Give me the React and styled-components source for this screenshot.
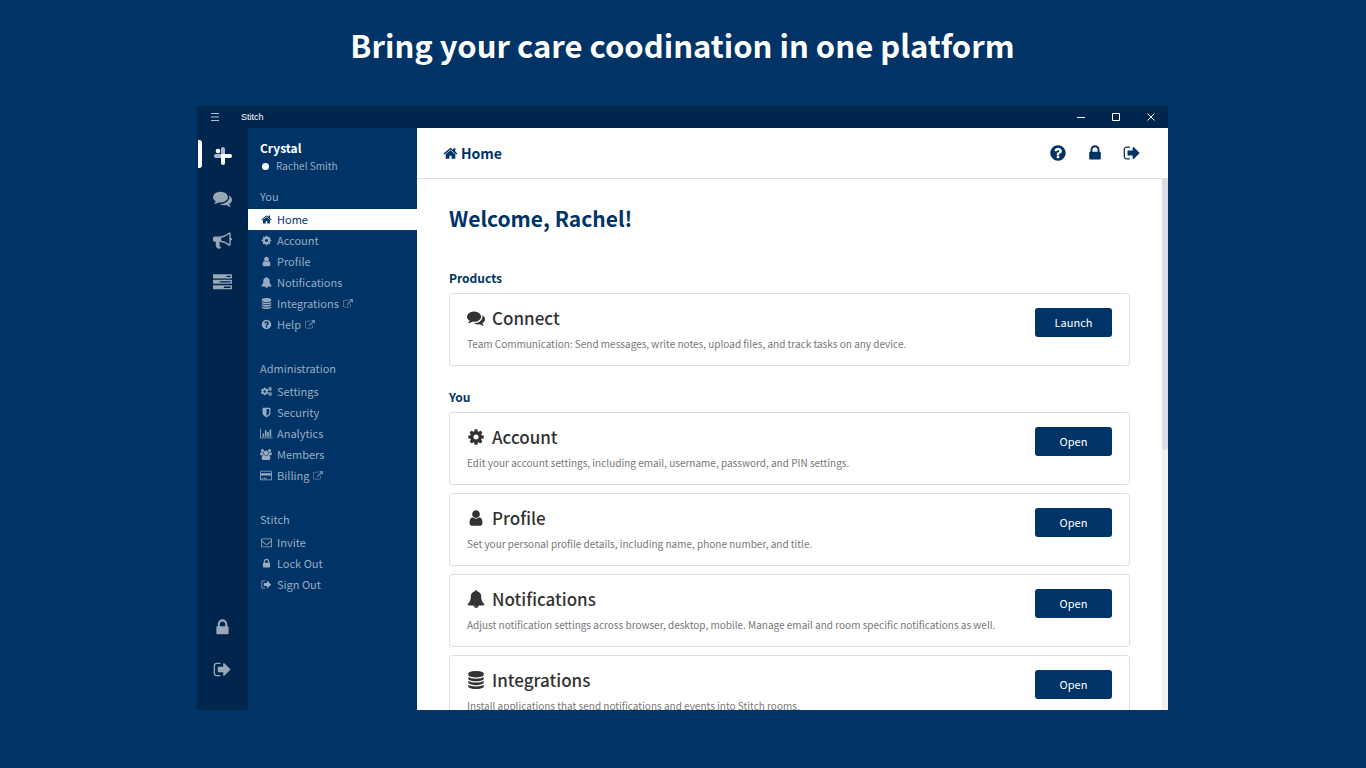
import React from 'react';
import styled, { createGlobalStyle } from 'styled-components';
import { FaCogs } from 'react-icons/fa';

const paths = {
    home: 'M1472 992v480q0 26-19 45t-45 19h-384v-384h-256v384h-384q-26 0-45-19t-19-45v-480q0-1 .5-3t.5-3l575-474 575 474q1 2 1 6zm223-69l-62 74q-8 9-21 11h-3q-13 0-21-7l-692-577-692 577q-12 8-24 7-13-2-21-11l-62-74q-8-10-7-23.5t11-21.5l719-599q32-26 76-26t76 26l244 204v-195q0-14 9-23t23-9h192q14 0 23 9t9 23v408l219 182q10 8 11 21.5t-7 23.5z',
    lock: 'M640 768h512v-192q0-106-75-181t-181-75-181 75-75 181v192zm832 96v576q0 40-28 68t-68 28h-960q-40 0-68-28t-28-68v-576q0-40 28-68t68-28h32v-192q0-184 132-316t316-132 316 132 132 316v192h32q40 0 68 28t28 68z',
    signOut: 'M704 1440q0 4 1 20t.5 26.5-3 23.5-10 19.5-20.5 6.5h-320q-119 0-203.5-84.5t-84.5-203.5v-704q0-119 84.5-203.5t203.5-84.5h320q13 0 22.5 9.5t9.5 22.5q0 4 1 20t.5 26.5-3 23.5-10 19.5-20.5 6.5h-320q-66 0-113 47t-47 113v704q0 66 47 113t113 47h312l11.5 1 11.5 3 8 5.5 7 9 2 13.5zm928-544q0 26-19 45l-544 544q-19 19-45 19t-45-19-19-45v-288h-448q-26 0-45-19t-19-45v-384q0-26 19-45t45-19h448v-288q0-26 19-45t45-19 45 19l544 544q19 19 19 45z',
    question: 'M1024 1376v-192q0-14-9-23t-23-9h-192q-14 0-23 9t-9 23v192q0 14 9 23t23 9h192q14 0 23-9t9-23zm256-672q0-88-55.5-163t-138.5-116-170-41q-243 0-371 213-15 24 8 42l132 100q7 6 19 6 16 0 25-12 53-68 86-92 34-24 86-24 48 0 85.5 26t37.5 59q0 38-20 61t-68 45q-63 28-115.5 86.5t-52.5 125.5v36q0 14 9 23t23 9h192q14 0 23-9t9-23q0-19 21.5-49.5t54.5-49.5q32-18 49-28.5t46-35 44.5-48 28-60.5 12.5-81zm384 192q0 209-103 385.5t-279.5 279.5-385.5 103-385.5-103-279.5-279.5-103-385.5 103-385.5 279.5-279.5 385.5-103 385.5 103 279.5 279.5 103 385.5z',
    cog: 'M1152 896q0-106-75-181t-181-75-181 75-75 181 75 181 181 75 181-75 75-181zm512-109v222q0 12-8 23t-20 13l-185 28q-19 54-39 91 35 50 107 138 10 12 10 25t-9 23q-27 37-99 108t-94 71q-12 0-26-9l-138-108q-44 23-91 38-16 136-29 186-7 28-36 28h-222q-14 0-24.5-8.5t-11.5-21.5l-28-184q-49-16-90-37l-141 107q-10 9-25 9-14 0-25-11-126-114-165-168-7-10-7-23 0-12 8-23 15-21 51-66.5t54-70.5q-27-50-41-99l-183-27q-13-2-21-12.5t-8-23.5v-222q0-12 8-23t19-13l186-28q14-46 39-92-40-57-107-138-10-12-10-24 0-10 9-23 26-36 98.5-107.5t94.5-71.5q13 0 26 10l138 107q44-23 91-38 16-136 29-186 7-28 36-28h222q14 0 24.5 8.5t11.5 21.5l28 184q49 16 90 37l142-107q9-9 24-9 13 0 25 10 129 119 165 170 7 8 7 22 0 12-8 23-15 21-51 66.5t-54 70.5q26 50 41 98l183 28q13 2 21 12.5t8 23.5z',
    user: 'M1536 1399q0 109-62.5 187t-150.5 78h-854q-88 0-150.5-78t-62.5-187q0-85 8.5-160.5t31.5-152 58.5-131 94-89 134.5-34.5q131 128 313 128t313-128q76 0 134.5 34.5t94 89 58.5 131 31.5 152 8.5 160.5zm-256-887q0 159-112.5 271.5t-271.5 112.5-271.5-112.5-112.5-271.5 112.5-271.5 271.5-112.5 271.5 112.5 112.5 271.5z',
    bell: 'M912 1696q0-16-16-16-59 0-101.5-42.5t-42.5-101.5q0-16-16-16t-16 16q0 73 51.5 124.5t124.5 51.5q16 0 16-16zm816-288q0 52-38 90t-90 38h-448q0 106-75 181t-181 75-181-75-75-181h-448q-52 0-90-38t-38-90q50-42 91-88t85-119.5 74.5-158.5 50-206 19.5-260q0-152 117-282.5t307-158.5q-8-19-8-39 0-40 28-68t68-28 68 28 28 68q0 20-8 39 190 28 307 158.5t117 282.5q0 139 19.5 260t50 206 74.5 158.5 85 119.5 91 88z',
    database: 'M896 768q237 0 443-43t325-127v170q0 69-103 128t-280 93.5-385 34.5-385-34.5-280-93.5-103-128v-170q119 84 325 127t443 43zm0 768q237 0 443-43t325-127v170q0 69-103 128t-280 93.5-385 34.5-385-34.5-280-93.5-103-128v-170q119 84 325 127t443 43zm0-384q237 0 443-43t325-127v170q0 69-103 128t-280 93.5-385 34.5-385-34.5-280-93.5-103-128v-170q119 84 325 127t443 43zm0-1152q208 0 385 34.5t280 93.5 103 128v128q0 69-103 128t-280 93.5-385 34.5-385-34.5-280-93.5-103-128v-128q0-69 103-128t280-93.5 385-34.5z',
    external: 'M1408 928v320q0 119-84.5 203.5t-203.5 84.5h-832q-119 0-203.5-84.5t-84.5-203.5v-832q0-119 84.5-203.5t203.5-84.5h704q14 0 23 9t9 23v64q0 14-9 23t-23 9h-704q-66 0-113 47t-47 113v832q0 66 47 113t113 47h832q66 0 113-47t47-113v-320q0-14 9-23t23-9h64q14 0 23 9t9 23zm384-864v512q0 26-19 45t-45 19-45-19l-176-176-652 652q-10 10-23 10t-23-10l-114-114q-10-10-10-23t10-23l652-652-176-176q-19-19-19-45t19-45 45-19h512q26 0 45 19t19 45z',
    comments: 'M1408 768q0 139-94 257t-256.5 186.5-353.5 68.5q-86 0-176-16-124 88-278 128-36 9-86 16h-3q-11 0-20.5-8t-11.5-21q-1-3-1-6.5t.5-6.5 2-6l2.5-5 3.5-5.5 4-5 4.5-5 4-4.5q5-6 23-25t26-29.5 22.5-29 25-38.5 20.5-44q-124-72-195-177t-71-224q0-139 94-257t256.5-186.5 353.5-68.5 353.5 68.5 256.5 186.5 94 257zm384 256q0 120-71 224.5t-195 176.5q10 24 20.5 44t25 38.5 22.5 29 26 29.5 23 25q1 1 4 4.5t4.5 5 4 5 3.5 5.5l2.5 5 2 6 .5 6.5-1 6.5q-3 14-13 22t-22 7q-50-7-86-16-154-40-278-128-90 16-176 16-271 0-472-132 58 4 88 4 161 0 309-45t264-129q125-92 192-212t67-254q0-77-23-152 129 71 204 178t75 230z',
    bullhorn: 'M1664 640q53 0 90.5 37.5t37.5 90.5-37.5 90.5-90.5 37.5v384q0 52-38 90t-90 38q-417-347-812-380-58 19-91 66t-31 100.5 40 92.5q-20 33-23 65.5t6 58 33.5 55 48 50 61.5 50.5q-29 58-111.5 83t-168.5 11.5-132-55.5q-7-23-29.5-87.5t-32-94.5-23-89-15-101 3.5-98.5 22-110.5h-122q-66 0-113-47t-47-113v-192q0-66 47-113t113-47h480q435 0 896-384 52 0 90 38t38 90v384zm-128 604v-954q-394 302-768 343v270q377 42 768 341z',
    tasks: 'M1024 1408h640v-128h-640v128zm-384-512h1024v-128h-1024v128zm640-512h384v-128h-384v128zm512 832v256q0 26-19 45t-45 19h-1664q-26 0-45-19t-19-45v-256q0-26 19-45t45-19h1664q26 0 45 19t19 45zm0-512v256q0 26-19 45t-45 19h-1664q-26 0-45-19t-19-45v-256q0-26 19-45t45-19h1664q26 0 45 19t19 45zm0-512v256q0 26-19 45t-45 19h-1664q-26 0-45-19t-19-45v-256q0-26 19-45t45-19h1664q26 0 45 19t19 45z',
    shield: 'M1344 960v-640h-448v1137q119-63 213-137 235-184 235-360zm192-768v768q0 86-33.5 170.5t-83 150-118 127.5-126.5 103-121 77.5-89.5 49.5-42.5 20q-12 6-26 6t-26-6q-16-7-42.5-20t-89.5-49.5-121-77.5-126.5-103-118-127.5-83-150-33.5-170.5v-768q0-26 19-45t45-19h1152q26 0 45 19t19 45z',
    chart: 'M640 896v512h-256v-512h256zm384-512v1024h-256v-1024h256zm1024 1152v128h-2048v-1536h128v1408h1920zm-640-896v768h-256v-768h256zm384-384v1152h-256v-1152h256z',
    users: 'M593 896q-162 5-265 128h-134q-82 0-138-40.5t-56-118.5q0-353 124-353 6 0 43.5 21t97.5 42.5 119 21.5q67 0 133-23-5 37-5 66 0 139 81 256zm1071 637q0 120-73 189.5t-194 69.5h-874q-121 0-194-69.5t-73-189.5q0-53 3.5-103.5t14-109 26.5-108.5 43-97.5 62-81 85.5-53.5 111.5-20q10 0 43 21.5t73 48 107 48 135 21.5 135-21.5 107-48 73-48 43-21.5q61 0 111.5 20t85.5 53.5 62 81 43 97.5 26.5 108.5 14 109 3.5 103.5zm-1024-1277q0 106-75 181t-181 75-181-75-75-181 75-181 181-75 181 75 75 181zm704 384q0 159-112.5 271.5t-271.5 112.5-271.5-112.5-112.5-271.5 112.5-271.5 271.5-112.5 271.5 112.5 112.5 271.5zm576 225q0 78-56 118.5t-138 40.5h-134q-103-123-265-128 81-117 81-256 0-29-5-66 66 23 133 23 59 0 119-21.5t97.5-42.5 43.5-21q124 0 124 353zm-128-609q0 106-75 181t-181 75-181-75-75-181 75-181 181-75 181 75 75 181z',
    card: 'M1760 128q66 0 113 47t47 113v1216q0 66-47 113t-113 47h-1600q-66 0-113-47t-47-113v-1216q0-66 47-113t113-47h1600zm-1600 128q-13 0-22.5 9.5t-9.5 22.5v224h1664v-224q0-13-9.5-22.5t-22.5-9.5h-1600zm1600 1280q13 0 22.5-9.5t9.5-22.5v-608h-1664v608q0 13 9.5 22.5t22.5 9.5h1600zm-1504-128v-128h256v128h-256zm384 0v-128h384v128h-384z',
    envelope: 'M1664 1504v-768q-32 36-69 66-268 206-426 338-51 43-83 67t-86.5 48.5-102.5 24.5h-2q-48 0-102.5-24.5t-86.5-48.5-83-67q-158-132-426-338-37-30-69-66v768q0 13 9.5 22.5t22.5 9.5h1472q13 0 22.5-9.5t9.5-22.5zm0-1051v-24.5l-.5-13-3-12.5-5.5-9-9-7.5-14-2.5h-1472q-13 0-22.5 9.5t-9.5 22.5q0 168 147 284 193 152 401 317 6 5 35 29.5t46 37.5 44.5 31.5 50.5 27.5 43 9h2q20 0 43-9t50.5-27.5 44.5-31.5 46-37.5 35-29.5q208-165 401-317 54-43 100.5-115.5t46.5-131.5zm128-37v1088q0 66-47 113t-113 47h-1472q-66 0-113-47t-47-113v-1088q0-66 47-113t113-47h1472q66 0 113 47t47 113z',
};

// a few glyphs are wider than the usual 1792 grid
const widths = { chart: 2048, users: 1920, card: 1920 };

function Icon({ name, size }) {
    if (name === 'cogs') return <FaCogs size={size} aria-hidden="true" />;
    const w = widths[name] || 1792;
    return (
        <svg width={Math.round(size * w / 1792)} height={size} viewBox={`0 0 ${w} 1792`} fill="currentColor" aria-hidden="true">
            <path d={paths[name]} />
        </svg>
    );
}

function Logo() {
    return (
        <svg width="20" height="20" viewBox="0 0 20 20" aria-hidden="true">
            <rect x="8" y="1" width="4" height="10" rx="2" fill="#a9b8d0" />
            <rect x="1" y="8" width="10" height="4" rx="2" fill="#a9b8d0" />
            <rect x="8" y="8" width="11" height="4" rx="2" fill="#fff" />
            <rect x="8" y="8" width="4" height="11" rx="2" fill="#fff" />
            <circle cx="5" cy="5" r="2.3" fill="#fff" />
        </svg>
    );
}

const menu = [
    {
        title: 'You',
        items: [
            { icon: 'home', label: 'Home', active: true },
            { icon: 'cog', label: 'Account' },
            { icon: 'user', label: 'Profile' },
            { icon: 'bell', label: 'Notifications' },
            { icon: 'database', label: 'Integrations', external: true },
            { icon: 'question', label: 'Help', external: true },
        ],
    },
    {
        title: 'Administration',
        items: [
            { icon: 'cogs', label: 'Settings' },
            { icon: 'shield', label: 'Security' },
            { icon: 'chart', label: 'Analytics' },
            { icon: 'users', label: 'Members' },
            { icon: 'card', label: 'Billing', external: true },
        ],
    },
    {
        title: 'Stitch',
        items: [
            { icon: 'envelope', label: 'Invite' },
            { icon: 'lock', label: 'Lock Out' },
            { icon: 'signOut', label: 'Sign Out' },
        ],
    },
];

const sections = [
    {
        title: 'Products',
        cards: [
            { icon: 'comments', title: 'Connect', action: 'Launch', text: 'Team Communication: Send messages, write notes, upload files, and track tasks on any device.' },
        ],
    },
    {
        title: 'You',
        cards: [
            { icon: 'cog', title: 'Account', action: 'Open', text: 'Edit your account settings, including email, username, password, and PIN settings.' },
            { icon: 'user', title: 'Profile', action: 'Open', text: 'Set your personal profile details, including name, phone number, and title.' },
            { icon: 'bell', title: 'Notifications', action: 'Open', text: 'Adjust notification settings across browser, desktop, mobile. Manage email and room specific notifications as well.' },
            { icon: 'database', title: 'Integrations', action: 'Open', text: 'Install applications that send notifications and events into Stitch rooms.' },
        ],
    },
];

export default function App() {
    return (
        <Page>
            <GlobalStyle />
            <Headline>Bring your care coodination in one platform</Headline>
            <Window>
                <TitleBar>
                    <BarButton aria-label="Menu">
                        <svg width="8" height="8" viewBox="0 0 8 8" stroke="#b9c4d0"><path d="M0 .5h8M0 4h8M0 7.5h8" /></svg>
                    </BarButton>
                    <AppName>Stitch</AppName>
                    <BarButton aria-label="Minimize">
                        <svg width="8" height="8" viewBox="0 0 8 8" stroke="#fff"><path d="M0 4.5h8" /></svg>
                    </BarButton>
                    <BarButton aria-label="Maximize">
                        <svg width="8" height="8" viewBox="0 0 8 8" stroke="#fff" fill="none"><path d="M.5.5h7v7h-7z" /></svg>
                    </BarButton>
                    <BarButton aria-label="Close">
                        <svg width="8" height="8" viewBox="0 0 8 8" stroke="#fff"><path d="M.5.5l7 7M7.5.5l-7 7" /></svg>
                    </BarButton>
                </TitleBar>
                <Body>
                    <Rail>
                        <RailButton $active aria-label="Stitch home"><Logo /></RailButton>
                        <RailButton aria-label="Connect"><Icon name="comments" size={19} /></RailButton>
                        <RailButton aria-label="Announcements"><Icon name="bullhorn" size={19} /></RailButton>
                        <RailButton aria-label="Tasks"><Icon name="tasks" size={19} /></RailButton>
                        <Spacer />
                        <RailButton aria-label="Lock out"><Icon name="lock" size={19} /></RailButton>
                        <RailButton aria-label="Sign out"><Icon name="signOut" size={19} /></RailButton>
                    </Rail>
                    <Sidebar>
                        <Team>Crystal</Team>
                        <Member><Dot />Rachel Smith</Member>
                        {menu.map(group => (
                            <MenuGroup key={group.title}>
                                <MenuTitle>{group.title}</MenuTitle>
                                {group.items.map(item => (
                                    <MenuLink key={item.label} href="#" $active={item.active}>
                                        <MenuIcon><Icon name={item.icon} size={11} /></MenuIcon>
                                        {item.label}
                                        {item.external && <External><Icon name="external" size={10} /></External>}
                                    </MenuLink>
                                ))}
                            </MenuGroup>
                        ))}
                    </Sidebar>
                    <Main>
                        <TopBar>
                            <PageName><Icon name="home" size={15} />Home</PageName>
                            <TopButton aria-label="Help"><Icon name="question" size={18} /></TopButton>
                            <TopButton aria-label="Lock out"><Icon name="lock" size={18} /></TopButton>
                            <TopButton aria-label="Sign out"><Icon name="signOut" size={18} /></TopButton>
                        </TopBar>
                        <ScrollArea>
                            <Content>
                                <Welcome>Welcome, Rachel!</Welcome>
                                {sections.map(section => (
                                    <Section key={section.title}>
                                        <SectionTitle>{section.title}</SectionTitle>
                                        <Cards>
                                            {section.cards.map(card => (
                                                <Card key={card.title}>
                                                    <CardText>
                                                        <CardTitle><Icon name={card.icon} size={18} />{card.title}</CardTitle>
                                                        <p>{card.text}</p>
                                                    </CardText>
                                                    <CardButton>{card.action}</CardButton>
                                                </Card>
                                            ))}
                                        </Cards>
                                    </Section>
                                ))}
                            </Content>
                            <Track><Thumb /></Track>
                        </ScrollArea>
                    </Main>
                </Body>
            </Window>
        </Page>
    );
}

const GlobalStyle = createGlobalStyle`
    * {
        box-sizing: border-box;
    }
    body {
        margin: 0;
        background: #003366;
        font-family: "Noto Sans CJK SC", "Noto Sans", sans-serif;
    }
    h1, h2, h3, p {
        margin: 0;
    }
    button {
        font-family: inherit;
        border: none;
        padding: 0;
        cursor: pointer;
    }
    svg {
        display: block;
        flex: none;
    }
`

const Page = styled.div`
    height: 100vh;
    display: flex;
    flex-direction: column;
    padding: 20px 198px 58px 197px;
`

const Headline = styled.h1`
    color: #fff;
    font-size: 31px;
    line-height: 50px;
    font-weight: 700;
    text-align: center;
    white-space: nowrap;
    margin-bottom: 36px;
`

const Window = styled.div`
    flex: 1;
    min-height: 0;
    display: flex;
    flex-direction: column;
`

const TitleBar = styled.header`
    height: 22px;
    display: flex;
    align-items: center;
    background: #00264d;
`

const BarButton = styled.button`
    width: 35px;
    height: 22px;
    display: flex;
    align-items: center;
    justify-content: center;
    background: transparent;
`

const AppName = styled.span`
    flex: 1;
    padding-left: 9px;
    color: #fff;
    font-family: "Liberation Sans", Arial, sans-serif;
    font-size: 9px;
`

const Body = styled.div`
    flex: 1;
    min-height: 0;
    display: flex;
`

const Rail = styled.nav`
    width: 51px;
    display: flex;
    flex-direction: column;
    padding: 7px 0 20px;
    background: #00264d;
`

const RailButton = styled.button`
    position: relative;
    height: 42px;
    display: flex;
    align-items: center;
    justify-content: center;
    color: #99a8b8;
    background: transparent;

    &::before {
        content: "";
        display: ${props => props.$active ? 'block' : 'none'};
        position: absolute;
        left: 1px;
        top: 5px;
        width: 4px;
        height: 28px;
        border-radius: 0 3px 3px 0;
        background: #fff;
    }
`

const Spacer = styled.div`
    flex: 1;
`

const Sidebar = styled.nav`
    width: 169px;
    padding-top: 11px;
    color: #99adc2;
    background: #003366;
`

const Team = styled.h2`
    padding-left: 12px;
    color: #fff;
    font-size: 12px;
    line-height: 18px;
    font-weight: 700;
`

const Member = styled.div`
    display: flex;
    align-items: center;
    margin-bottom: 8px;
    padding-left: 14px;
    font-size: 10px;
    line-height: 18px;
`

const Dot = styled.span`
    width: 7px;
    height: 7px;
    margin-right: 7px;
    border-radius: 50%;
    background: #fff;
`

const MenuGroup = styled.div`
    padding-bottom: 20px;
`

const MenuTitle = styled.h3`
    padding-left: 12px;
    font-size: 11px;
    line-height: 26px;
    font-weight: 400;
`

const MenuLink = styled.a`
    height: 21px;
    display: flex;
    align-items: center;
    padding-left: 12px;
    font-size: 11px;
    line-height: 21px;
    text-decoration: none;
    color: ${props => props.$active ? '#003366' : 'inherit'};
    background: ${props => props.$active ? '#fff' : 'transparent'};
`

const MenuIcon = styled.span`
    width: 12px;
    margin-right: 5px;
    display: flex;
    justify-content: center;
`

const External = styled.span`
    margin-left: 4px;
    opacity: 0.7;
`

const Main = styled.main`
    flex: 1;
    min-width: 0;
    display: flex;
    flex-direction: column;
    background: #fff;
`

const TopBar = styled.div`
    height: 51px;
    display: flex;
    align-items: center;
    gap: 19px;
    padding: 0 27px 0 26px;
    color: #003366;
    border-bottom: 1px solid #dfdfdf;
`

const PageName = styled.h2`
    flex: 1;
    display: flex;
    align-items: center;
    gap: 3px;
    font-size: 14px;
    line-height: 20px;
    font-weight: 700;
`

const TopButton = styled.button`
    color: #003366;
    background: transparent;
`

const ScrollArea = styled.div`
    flex: 1;
    min-height: 0;
    display: flex;
`

const Content = styled.div`
    flex: 1;
    min-width: 0;
    padding: 24px 32px;
    overflow-y: auto;
    scrollbar-width: none;
`

const Track = styled.div`
    width: 6px;
    background: #f1f1f3;
`

const Thumb = styled.div`
    height: 51%;
    border-radius: 0 0 3px 3px;
    background: #dcdce2;
`

const Welcome = styled.h1`
    margin-bottom: 35px;
    color: #003366;
    font-size: 21px;
    line-height: 30px;
    font-weight: 700;
`

const Section = styled.section`
    margin-bottom: 21px;
`

const SectionTitle = styled.h2`
    margin-bottom: 5px;
    color: #003366;
    font-size: 12px;
    line-height: 20px;
    font-weight: 700;
`

const Cards = styled.div`
    display: flex;
    flex-direction: column;
    gap: 8px;
`

const Card = styled.article`
    height: 73px;
    display: flex;
    align-items: flex-start;
    padding: 14px 17px;
    border: 1px solid #dfdfdf;
    border-radius: 3px;
`

const CardText = styled.div`
    flex: 1;
    min-width: 0;

    p {
        margin-top: 8px;
        color: #777;
        font-size: 10px;
        line-height: 16px;
        white-space: nowrap;
    }
`

const CardTitle = styled.h3`
    display: flex;
    align-items: center;
    gap: 7px;
    color: #333;
    font-size: 17px;
    line-height: 20px;
    font-weight: 500;
`

const CardButton = styled.button`
    width: 77px;
    height: 29px;
    color: #fff;
    background: #003366;
    border-radius: 3px;
    font-size: 11px;
    line-height: 29px;
`
